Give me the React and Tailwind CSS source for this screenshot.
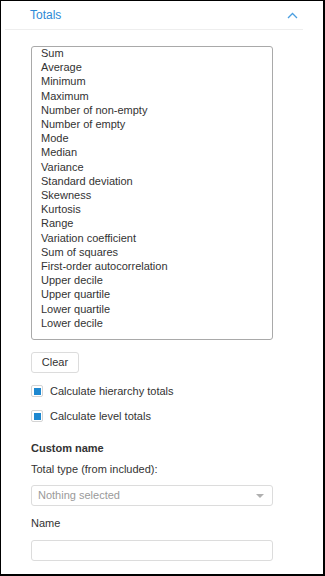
const totals = [
  "Sum",
  "Average",
  "Minimum",
  "Maximum",
  "Number of non-empty",
  "Number of empty",
  "Mode",
  "Median",
  "Variance",
  "Standard deviation",
  "Skewness",
  "Kurtosis",
  "Range",
  "Variation coefficient",
  "Sum of squares",
  "First-order autocorrelation",
  "Upper decile",
  "Upper quartile",
  "Lower quartile",
  "Lower decile",
];

function Check({ label }) {
  return (
    <label className="flex items-center gap-[7px] h-[12px]">
      <span className="w-[12px] h-[12px] border border-[#d4d4d4] rounded-[2px] flex items-center justify-center">
        <span className="w-[7px] h-[7px] bg-[#1e88d0]" />
      </span>
      <span className="leading-[14px]">{label}</span>
    </label>
  );
}

export default function App() {
  return (
    <div
      className="w-[325px] h-[576px] bg-white border-l border-t border-r-2 border-b-2 border-black flex flex-col text-[11px] text-[#333]"
      style={{ fontFamily: '"Liberation Sans", Arial, sans-serif' }}
    >
      <div className="h-[28px] flex items-center justify-between pl-[29px] pr-[25px]">
        <span className="text-[12px] text-[#2d8ad6]">Totals</span>
        <svg width="11" height="7" viewBox="0 0 11 7" fill="none">
          <path d="M1 6 L5.5 1.5 L10 6" stroke="#4a9ee0" strokeWidth="1.3" />
        </svg>
      </div>
      <div className="ml-[4px] w-[298px] h-px bg-[#eeeeee]" />

      <div className="pl-[30px] pt-[16px] flex flex-col">
        <div className="w-[242px] h-[294px] border border-[#a9a9a9] rounded-[3px] pl-[9px]">
          <div className="-mt-[1px]">
            {totals.map((t) => (
              <div key={t} className="leading-[14.2px]">{t}</div>
            ))}
          </div>
        </div>

        <button className="mt-[12px] w-[48px] h-[21px] border border-[#dcdcdc] rounded-[3px] bg-white text-[11px] text-[#333]">
          Clear
        </button>

        <div className="mt-[12px] flex flex-col gap-[13px]">
          <Check label="Calculate hierarchy totals" />
          <Check label="Calculate level totals" />
        </div>

        <div className="mt-[19px] font-bold leading-[14px]">Custom name</div>
        <div className="mt-[7px] leading-[14px]">Total type (from included):</div>
        <div className="mt-[9px] w-[242px] h-[21px] border border-[#dcdcdc] rounded-[3px] flex items-center justify-between pl-[6px] pr-[8px]">
          <span className="text-[#9a9a9a]">Nothing selected</span>
          <svg width="8" height="4" viewBox="0 0 8 4">
            <path d="M0 0 H8 L4 4 Z" fill="#b0b0b0" />
          </svg>
        </div>

        <div className="mt-[10px] leading-[14px]">Name</div>
        <input className="mt-[10px] w-[242px] h-[21px] border border-[#dcdcdc] rounded-[3px] outline-none px-[6px]" />
      </div>
    </div>
  );
}
